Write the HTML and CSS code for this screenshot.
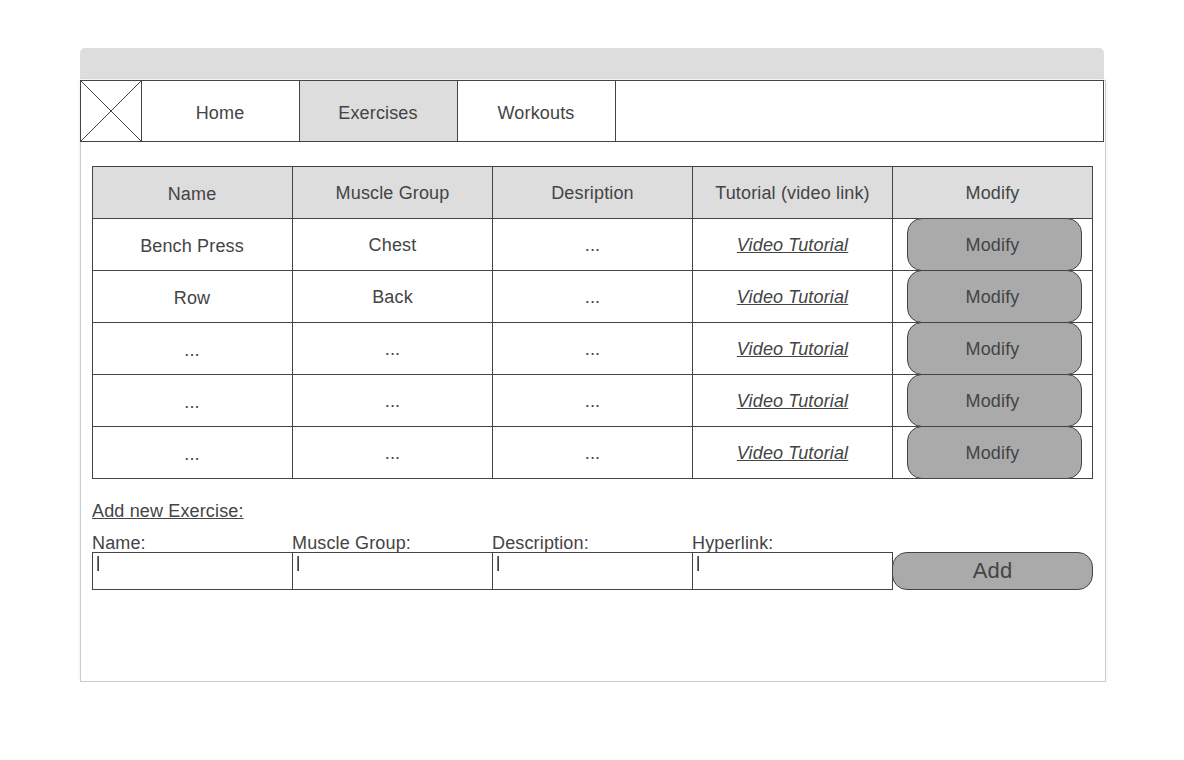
FILE: index.html
```html
<!DOCTYPE html>
<html lang="en">
<head>
<meta charset="utf-8">
<title>Exercises</title>
<link rel="stylesheet" href="styles.css">
</head>
<body>
<div class="titlebar"></div>
<div class="window">
  <nav class="nav">
    <svg class="logo" viewBox="0 0 60 60"><path d="M0 0L60 60M60 0L0 60"/></svg>
    <a class="tab">Home</a>
    <a class="tab active">Exercises</a>
    <a class="tab">Workouts</a>
  </nav>
  <main class="content">
    <table class="table">
      <thead>
        <tr><th>Name</th><th>Muscle Group</th><th>Desription</th><th>Tutorial (video link)</th><th>Modify</th></tr>
      </thead>
      <tbody>
        <tr><td>Bench Press</td><td>Chest</td><td>...</td><td><a class="link">Video Tutorial</a></td><td><button class="button modify">Modify</button></td></tr>
        <tr><td>Row</td><td>Back</td><td>...</td><td><a class="link">Video Tutorial</a></td><td><button class="button modify">Modify</button></td></tr>
        <tr><td>...</td><td>...</td><td>...</td><td><a class="link">Video Tutorial</a></td><td><button class="button modify">Modify</button></td></tr>
        <tr><td>...</td><td>...</td><td>...</td><td><a class="link">Video Tutorial</a></td><td><button class="button modify">Modify</button></td></tr>
        <tr><td>...</td><td>...</td><td>...</td><td><a class="link">Video Tutorial</a></td><td><button class="button modify">Modify</button></td></tr>
      </tbody>
    </table>
    <h2 class="heading">Add new Exercise:</h2>
    <form class="form">
      <label class="field">Name:<span class="input"><span class="caret"></span></span></label>
      <label class="field">Muscle Group:<span class="input"><span class="caret"></span></span></label>
      <label class="field">Description:<span class="input"><span class="caret"></span></span></label>
      <label class="field">Hyperlink:<span class="input"><span class="caret"></span></span></label>
      <button class="button add" type="button">Add</button>
    </form>
  </main>
</div>
</body>
</html>
```
FILE: styles.css
```css
* { box-sizing: border-box; }
body {
  margin: 0;
  padding: 48px 78px 0 80px;
  background: #fff;
  color: #444;
  font: 18px/20px "Liberation Sans", Arial, sans-serif;
  letter-spacing: 0.15px;
}
.titlebar {
  width: 1024px;
  height: 31px;
  margin-bottom: 1px;
  border-radius: 5px 5px 0 0;
  background: #ddd;
}
.window {
  width: 1026px;
  height: 602px;
  border: 1px solid #ccc;
  box-shadow: 0 0 4px rgba(0, 0, 0, 0.08);
}
.nav {
  display: flex;
  width: 1024px;
  height: 62px;
  margin: -1px 0 0 -1px;
  border: 1px solid #444;
  background: #fff;
}
.logo { width: 60px; height: 60px; overflow: visible; }
.logo path { stroke: #444; stroke-width: 1; fill: none; }
.tab {
  width: 158px;
  padding: 22px 1px 0 0;
  border-left: 1px solid #444;
  text-align: center;
}
.tab:last-child { width: 159px; border-right: 1px solid #444; }
.active { background: #ddd; }
.content { padding: 24px 0 0 11px; }
.table {
  display: grid;
  width: 1001px;
  border: solid #444;
  border-width: 1px 0 0 1px;
}
.table thead, .table tbody { display: grid; }
.table tr { display: grid; grid-template-columns: repeat(5, 200px); height: 52px; }
.table th, .table td {
  padding: 16px 0 0;
  border: solid #444;
  border-width: 0 1px 1px 0;
  text-align: center;
  font-weight: normal;
}
.table th { background: #ddd; }
.table th:first-child, .table td:first-child { padding: 17px 1px 0 0; }
.table td:last-child { padding: 0; }
.link { font-style: italic; text-decoration: underline; }
.button {
  display: block;
  padding: 0;
  border: 1px solid #444;
  border-radius: 15px;
  background: #aaa;
  color: #444;
  font: inherit;
  letter-spacing: inherit;
}
.modify { width: 175px; height: 53px; margin: -1px 0 -1px 14px; padding-right: 4px; }
.heading {
  margin: 22px 0 12px;
  font-size: 18px;
  font-weight: normal;
  text-decoration: underline;
}
.form { display: flex; align-items: flex-end; width: 1001px; }
.field { width: 200px; height: 57px; line-height: 21px; }
.input {
  display: flex;
  width: 201px;
  height: 38px;
  margin-top: -2px;
  padding: 3px 0 0 4px;
  border: 1px solid #444;
}
.caret { width: 2px; height: 15px; border-left: 1px solid #777; background: #444; }
.add { width: 201px; height: 38px; font-size: 22px; position: relative; }
```
